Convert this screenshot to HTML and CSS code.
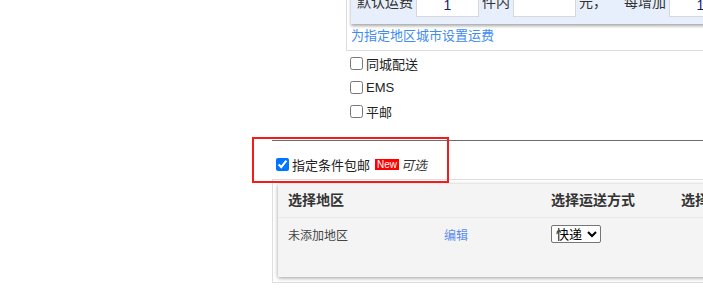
FILE: index.html
```html
<!DOCTYPE html>
<html lang="zh-CN">
<head>
    <meta charset="UTF-8">
    <title>运费模板</title>
    <link rel="stylesheet" href="styles.css">
</head>
<body>
    <div class="page">
        <!-- 默认运费 -->
        <div class="fee-block">
            <div class="fee-default">
                <span class="fee-label">默认运费</span>
                <input class="fee-input" type="text" value="1">
                <span>件内</span>
                <input class="fee-input" type="text" value="">
                <span>元，</span>
                <span class="fee-gap">每增加</span>
                <input class="fee-input" type="text" value="1">
            </div>
            <a class="fee-link" href="#">为指定地区城市设置运费</a>
        </div>

        <!-- 其他运送方式 -->
        <ul class="ship-list">
            <li><label><input type="checkbox"><span>同城配送</span></label></li>
            <li><label><input type="checkbox"><span>EMS</span></label></li>
            <li><label><input type="checkbox"><span>平邮</span></label></li>
        </ul>

        <div class="free-section">
            <div class="free-row">
                <label><input type="checkbox" checked><span>指定条件包邮</span></label>
                <span class="badge-new">New</span>
                <em class="optional">可选</em>
                <div class="highlight-box"></div>
            </div>

            <div class="rule-panel">
                <div class="rule-table">
                    <div class="rule-head">选择地区</div>
                    <div class="rule-head"></div>
                    <div class="rule-head">选择运送方式</div>
                    <div class="rule-head">选择快递</div>

                    <div class="rule-cell">未添加地区</div>
                    <div class="rule-cell"><a class="edit-link" href="#">编辑</a></div>
                    <div class="rule-cell">
                        <select class="ship-select">
                            <option>快递</option>
                            <option>EMS</option>
                            <option>平邮</option>
                        </select>
                    </div>
                    <div class="rule-cell"></div>
                </div>
            </div>
        </div>
    </div>
</body>
</html>
```

FILE: styles.css
```css
* {
    box-sizing: border-box;
}

body {
    margin: 0;
    overflow: hidden;
    background: #fff;
    color: #222;
    font-family: "Liberation Sans", "Noto Sans CJK SC", sans-serif;
    font-size: 13px;
}

a {
    text-decoration: none;
}

.page {
    width: 900px;
    padding-left: 272px;
}

/* 默认运费 */
.fee-block {
    margin-left: 74px;
    border-left: 1px solid #ddd;
    border-bottom: 1px solid #ddd;
    padding: 0 0 5px 4px;
}

.fee-default {
    display: flex;
    align-items: flex-end;
    gap: 3px;
    height: 42px;
    margin-top: -18px;
    padding: 0 0 7px 6px;
    background: #e6effb;
    box-shadow: 0 2px 3px rgba(0, 0, 0, 0.35);
    font-size: 14px;
    color: #333;
}

.fee-default span {
    height: 25px;
    line-height: 21px;
}

.fee-input {
    width: 63px;
    height: 25px;
    border: 1px solid #d8d8d8;
    background: #fff;
    text-align: center;
    font-family: inherit;
    font-size: 14px;
    color: #1c1c6e;
}

.fee-default .fee-gap {
    margin-left: 14px;
}

.fee-link {
    display: block;
    margin-top: 3px;
    line-height: 18px;
    color: #3f8cf0;
}

/* 运送方式 */
.ship-list {
    list-style: none;
    margin: 0 0 17px 74px;
    padding: 0;
}

.ship-list li {
    height: 24px;
    display: flex;
    align-items: center;
}

.ship-list label,
.free-row label {
    display: flex;
    align-items: center;
}

input[type="checkbox"] {
    width: 13px;
    height: 13px;
    margin: 0 3px 0 4px;
}

/* 指定条件包邮 */
.free-section {
    border-top: 1px solid #6b6b6b;
    padding-top: 11px;
}

.free-row {
    position: relative;
    display: flex;
    align-items: center;
    height: 24px;
    margin-bottom: 3px;
}

.badge-new {
    margin-left: 5px;
    padding: 0 2px;
    height: 11px;
    line-height: 11px;
    background: #f00;
    color: #fff;
    font-size: 10px;
}

.optional {
    margin-left: 2px;
    color: #333;
}

/* 标注框 */
.highlight-box {
    position: absolute;
    left: -20px;
    top: -15px;
    width: 197px;
    height: 46px;
    border: 2px solid #f31c1c;
    pointer-events: none;
}

.rule-panel {
    border: 1px solid #ddd;
    padding: 4px 0 5px 5px;
}

.rule-table {
    display: grid;
    grid-template-columns: 156px 107px 130px 1fr;
    height: 93px;
    align-content: start;
    background: #f4f4f4;
    box-shadow: 0 1px 4px rgba(0, 0, 0, 0.4);
}

.rule-head {
    height: 34px;
    line-height: 32px;
    padding-left: 10px;
    border-bottom: 1px solid #e8e8e8;
    font-size: 14px;
    font-weight: bold;
    color: #333;
    white-space: nowrap;
}

.rule-cell {
    height: 34px;
    display: flex;
    align-items: center;
    padding-left: 10px;
    padding-bottom: 2px;
    font-size: 12px;
    color: #444;
}

.edit-link {
    color: #5d8def;
    font-size: 12px;
}

.ship-select {
    width: 50px;
    height: 18px;
    font-family: inherit;
    font-size: 13px;
    color: #000;
    border: 1px solid #767676;
    border-radius: 2px;
    background: #fff;
}
```
